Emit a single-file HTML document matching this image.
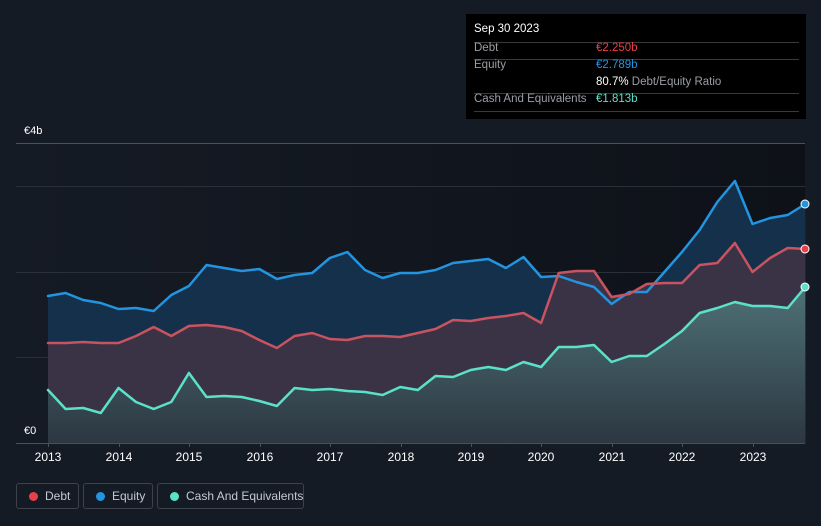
<!DOCTYPE html>
<html><head><meta charset="utf-8"><style>
body{margin:0;width:821px;height:526px;background:#151b25;font-family:"Liberation Sans",sans-serif;overflow:hidden;position:relative}
.t{position:absolute;font-size:11px;color:#fff}
.tip{position:absolute;left:466px;top:14px;width:340px;height:105px;background:#000}
.tip div{white-space:nowrap}
.tip .r{position:absolute;left:8px;width:325px;border-bottom:1px solid #3a3a3a;height:1px}
.lg{position:absolute;top:483px;height:26px;border:1px solid #3c414b;border-radius:3px;box-sizing:border-box;color:#c5c9d0;font-size:12px;line-height:24px;white-space:nowrap}
.lg i{position:absolute;left:12px;top:8px;width:9px;height:9px;border-radius:50%}
</style></head><body>
<svg width="821" height="526" style="position:absolute;left:0;top:0">
<defs>
<linearGradient id="bg" x1="0" x2="1" y1="0" y2="0"><stop offset="0" stop-color="#151b25"/><stop offset="1" stop-color="#0e1118"/></linearGradient>
<linearGradient id="cg" x1="0" x2="0" y1="0" y2="1"><stop offset="0" stop-color="#4e7175"/><stop offset="1" stop-color="#2c3742"/></linearGradient>
</defs>
<rect x="16" y="143" width="789" height="300" fill="url(#bg)"/>
<g stroke="#2a303a" stroke-width="1">
<line x1="16" x2="805" y1="186.5" y2="186.5"/><line x1="16" x2="805" y1="272.5" y2="272.5"/><line x1="16" x2="805" y1="357.5" y2="357.5"/>
</g>
<line x1="16" x2="805" y1="143.5" y2="143.5" stroke="#4a4f58"/>
<line x1="16" x2="805" y1="443.5" y2="443.5" stroke="#4a4f58"/>
<polygon fill="#15304a" points="48,443 48,296 65.6,293 83.2,300 100.8,303 118.5,309 136,308 153.7,311 171.3,295 188.9,286 206.5,265 224.1,268 241.7,271 259.3,269 276.9,279 294.6,275 312.2,273 329.8,258 347.4,252 365,270 382.6,278 400.2,273 417.8,273 435.5,270 453.1,263 470.7,261 488.3,259 505.9,268 523.5,257 541.1,277 558.7,276 576.4,282 594,287 611.6,304 629.2,292 646.8,292 664.4,272 682,252 699.6,230 717.3,202 734.9,181 752.5,224 770.1,218 787.7,215 805.3,204 805.3,443"/>
<polygon fill="#3a3346" points="48,443 48,343 65.6,343 83.2,342 100.8,343 118.5,343 136,336 153.7,327 171.3,336 188.9,326 206.5,325 224.1,327 241.7,331 259.3,340 276.9,348 294.6,336 312.2,333 329.8,339 347.4,340 365,336 382.6,336 400.2,337 417.8,333 435.5,329 453.1,320 470.7,321 488.3,318 505.9,316 523.5,313 541.1,323 558.7,273 576.4,271 594,271 611.6,297 629.2,294 646.8,284 664.4,283 682,283 699.6,265 717.3,263 734.9,243 752.5,272 770.1,258 787.7,248 805.3,249 805.3,443"/>
<polygon fill="url(#cg)" points="48,443 48,390 65.6,409 83.2,408 100.8,413 118.5,388 136,402 153.7,409 171.3,402 188.9,373 206.5,397 224.1,396 241.7,397 259.3,401 276.9,406 294.6,388 312.2,390 329.8,389 347.4,391 365,392 382.6,395 400.2,387 417.8,390 435.5,376 453.1,377 470.7,370 488.3,367 505.9,370 523.5,362 541.1,367 558.7,347 576.4,347 594,345 611.6,362 629.2,356 646.8,356 664.4,344 682,331 699.6,313 717.3,308 734.9,302 752.5,306 770.1,306 787.7,308 805.3,287 805.3,443"/>
<g fill="none" stroke-width="2.5" stroke-linejoin="round" stroke-linecap="round">
<polyline stroke="#2394df" points="48,296 65.6,293 83.2,300 100.8,303 118.5,309 136,308 153.7,311 171.3,295 188.9,286 206.5,265 224.1,268 241.7,271 259.3,269 276.9,279 294.6,275 312.2,273 329.8,258 347.4,252 365,270 382.6,278 400.2,273 417.8,273 435.5,270 453.1,263 470.7,261 488.3,259 505.9,268 523.5,257 541.1,277 558.7,276 576.4,282 594,287 611.6,304 629.2,292 646.8,292 664.4,272 682,252 699.6,230 717.3,202 734.9,181 752.5,224 770.1,218 787.7,215 805.3,204"/>
<polyline stroke="#c95360" points="48,343 65.6,343 83.2,342 100.8,343 118.5,343 136,336 153.7,327 171.3,336 188.9,326 206.5,325 224.1,327 241.7,331 259.3,340 276.9,348 294.6,336 312.2,333 329.8,339 347.4,340 365,336 382.6,336 400.2,337 417.8,333 435.5,329 453.1,320 470.7,321 488.3,318 505.9,316 523.5,313 541.1,323 558.7,273 576.4,271 594,271 611.6,297 629.2,294 646.8,284 664.4,283 682,283 699.6,265 717.3,263 734.9,243 752.5,272 770.1,258 787.7,248 805.3,249"/>
<polyline stroke="#5ce1c9" points="48,390 65.6,409 83.2,408 100.8,413 118.5,388 136,402 153.7,409 171.3,402 188.9,373 206.5,397 224.1,396 241.7,397 259.3,401 276.9,406 294.6,388 312.2,390 329.8,389 347.4,391 365,392 382.6,395 400.2,387 417.8,390 435.5,376 453.1,377 470.7,370 488.3,367 505.9,370 523.5,362 541.1,367 558.7,347 576.4,347 594,345 611.6,362 629.2,356 646.8,356 664.4,344 682,331 699.6,313 717.3,308 734.9,302 752.5,306 770.1,306 787.7,308 805.3,287"/>
</g>
<circle cx="805" cy="204" r="4" fill="#2394df" stroke="#fff" stroke-width="1"/>
<circle cx="805" cy="249" r="4" fill="#e8404a" stroke="#fff" stroke-width="1"/>
<circle cx="805" cy="287" r="4" fill="#5ce1c9" stroke="#fff" stroke-width="1"/>
<g stroke="#4a4f58"><line x1="48.5" x2="48.5" y1="443" y2="447"/><line x1="119.5" x2="119.5" y1="443" y2="447"/><line x1="189.5" x2="189.5" y1="443" y2="447"/><line x1="260.5" x2="260.5" y1="443" y2="447"/><line x1="330.5" x2="330.5" y1="443" y2="447"/><line x1="401.5" x2="401.5" y1="443" y2="447"/><line x1="471.5" x2="471.5" y1="443" y2="447"/><line x1="541.5" x2="541.5" y1="443" y2="447"/><line x1="612.5" x2="612.5" y1="443" y2="447"/><line x1="682.5" x2="682.5" y1="443" y2="447"/><line x1="753.5" x2="753.5" y1="443" y2="447"/></g>
<g fill="#fff" font-size="12" text-anchor="middle" font-family="Liberation Sans,sans-serif">
<text x="48" y="461">2013</text><text x="119" y="461">2014</text><text x="189" y="461">2015</text><text x="260" y="461">2016</text><text x="330" y="461">2017</text><text x="401" y="461">2018</text><text x="471" y="461">2019</text><text x="541" y="461">2020</text><text x="612" y="461">2021</text><text x="682" y="461">2022</text><text x="753" y="461">2023</text>
</g>
</svg>
<div class="t" style="left:24px;top:125px">€4b</div>
<div class="t" style="left:24px;top:425px">€0</div>
<div class="tip">
<div style="position:absolute;left:8px;top:9px;color:#fff;font-size:11.5px">Sep 30 2023</div>
<div class="r" style="top:27px"></div>
<div style="position:absolute;left:8px;top:28px;color:#9a9ea5;font-size:11.5px">Debt</div>
<div style="position:absolute;left:130px;top:28px;color:#e8404a;font-size:11.5px">€2.250b</div>
<div class="r" style="top:44px"></div>
<div style="position:absolute;left:8px;top:45px;color:#9a9ea5;font-size:11.5px">Equity</div>
<div style="position:absolute;left:130px;top:45px;color:#2394df;font-size:11.5px">€2.789b</div>
<div style="position:absolute;left:130px;top:62px;color:#9a9ea5;font-size:11.5px"><b style="color:#fff;font-weight:normal">80.7%</b> Debt/Equity Ratio</div>
<div class="r" style="top:78px"></div>
<div style="position:absolute;left:8px;top:79px;color:#9a9ea5;font-size:11.5px">Cash And Equivalents</div>
<div style="position:absolute;left:130px;top:79px;color:#5ce1c9;font-size:11.5px">€1.813b</div>
<div class="r" style="top:96px"></div>
</div>
<div class="lg" style="left:16px;width:63px"><i style="background:#e8404a"></i><span style="position:absolute;left:28px">Debt</span></div>
<div class="lg" style="left:83px;width:70px"><i style="background:#2394df"></i><span style="position:absolute;left:28px">Equity</span></div>
<div class="lg" style="left:157px;width:147px"><i style="background:#5ce1c9"></i><span style="position:absolute;left:28px">Cash And Equivalents</span></div>
</body></html>
